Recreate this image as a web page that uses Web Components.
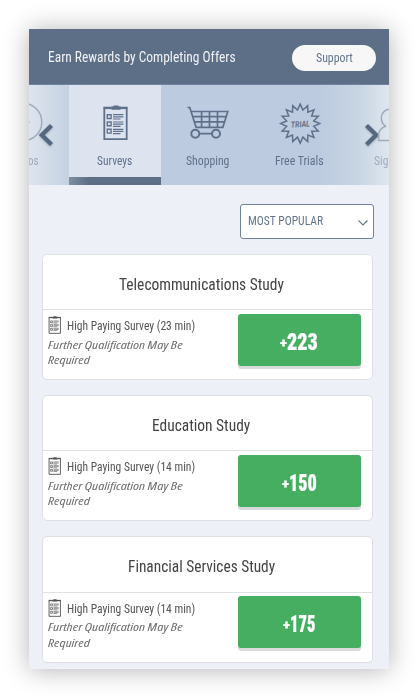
<!DOCTYPE html>
<html lang="en">
<head>
<meta charset="utf-8">
<title>Offers</title>
<style>
html,body{margin:0;background:#fff}
body{width:418px;height:698px;overflow:hidden;font-family:Roboto,"Liberation Sans",sans-serif}
</style>
</head>
<body>
<offer-app></offer-app>
<script>
const define = (name, html, setup) => {
  const t = document.createElement('template');
  t.innerHTML = html;
  customElements.define(name, class extends HTMLElement {
    connectedCallback() {
      if (this.shadowRoot) return;
      const root = this.attachShadow({mode: 'open'});
      root.append(t.content.cloneNode(true));
      if (setup) setup(this, root);
    }
  });
};

// Single line of condensed text set to an exact width
define('fit-text', `
<style>
:host{display:block;white-space:nowrap;flex:none}
span{display:inline-block;font-stretch:75%;transform-origin:0 50%;vertical-align:top}
</style><span><slot></slot></span>`, (el, root) => {
  const w = +el.getAttribute('w');
  el.style.width = w + 'px';
  const s = root.querySelector('span');
  requestAnimationFrame(() => {
    s.style.transform = `scaleX(${w / s.offsetWidth})`;
  });
  s.style.transform = `scaleX(${w / (s.offsetWidth || w)})`;
});

const icons = {
  video: '<circle cx="22" cy="20" r="18.800"/><path d="M26.500 18.900 28.500 20l-2 1.100Z" stroke-width="1"/>',
  survey: '<path d="M11.3 6.2h22.4v31H11.3Z" stroke-width="1.8"/><path d="M10.5 5.9h24" stroke-width="2.4"/><path d="M18.500 4.600h2v-1h5v1h2v3.200h-9Z" fill="currentColor" stroke="none"/><path d="M14.3 12.7h3.8v3.8h-3.8ZM14.3 20h3.8v3.8h-3.8ZM14.3 27.3h3.8v3.8h-3.8Z" stroke-width="1.4"/><path d="M20 12.7h10.4M20 14.8h10.4M20 17h7.5M20 20h10.4M20 22.1h10.4M20 24.3h7.5M20 27.3h10.4M20 29.4h10.4M20 31.6h7.5" stroke-width="1.2"/>',
  cart: '<path d="M2.5 5.5h2.3l6.4 20.2M5.8 9.5h37L37.8 25.3H11M7.4 14.6h33.8M9 19.9h30.5M16.6 9.5v15.8M24.5 9.5v15.8M32.5 9.5v15.8M14.5 31.7h12.3" stroke-width="1.700"/><circle cx="10.3" cy="31.7" r="4" stroke-width="2"/><circle cx="31" cy="31.7" r="4" stroke-width="2"/>',
  person: '<path d="M22 7.2c-5.800 0-9.700 3.700-9.700 8.600 0 3.400 1.500 6.600 4.100 8.400-4.200 1.600-6.800 4.600-6.800 9v5.300h25v-5.300c0-4.400-2.800-7.400-6.800-9 2.600-1.800 4-5 4-8.400C31.700 10.900 27.800 7.200 22 7.200Z" stroke-width="1.500"/>'
};
const star = () => {
  const p = [];
  for (let i = 0; i < 32; i++) {
    const r = i % 2 ? 13.8 : 19.5, a = Math.PI * i / 16 - Math.PI / 2;
    p.push((23.2 + r * Math.cos(a)).toFixed(2) + ',' + (21.6 + r * Math.sin(a)).toFixed(2));
  }
  return `<polygon points="${p.join(' ')}" stroke-width="1.500"/><text x="13.8" y="25.200" transform="rotate(-4 23 22)" textLength="19" lengthAdjust="spacingAndGlyphs" font-size="8.500" font-weight="700" font-style="italic" fill="currentColor" stroke="none">TRIAL</text>`;
};
icons.trial = star();

define('ui-icon', `
<style>:host{display:block;width:44px;height:44px;flex:none}svg{display:block;width:100%;height:100%}</style>
<svg fill="none" stroke="currentColor" stroke-width="1.500"></svg>`, (el, root) => {
  const s = root.querySelector('svg');
  s.setAttribute('viewBox', el.getAttribute('box') || '0 0 44 44');
  s.innerHTML = icons[el.getAttribute('name')];
});

define('offer-header', `
<style>
:host{display:flex;height:55px;background:#5d6f86;border-bottom:1px solid #6f82a0;padding:0 13px 0 19px;justify-content:space-between;align-items:flex-start;box-sizing:content-box}
.t{font-size:14px;line-height:20px;color:#f0f2f5;margin-top:18px}
.b{width:84px;height:26px;border-radius:13px;background:#f7f7f8;display:flex;align-items:center;justify-content:center;margin-top:16px;font-size:12px;line-height:26px;color:#64748c}
</style>
<fit-text class="t" w="187.500">Earn Rewards by Completing Offers</fit-text>
<div class="b"><fit-text w="36.500">Support</fit-text></div>`);

define('tab-strip', `
<style>
:host{display:block;position:relative;height:99.500px;overflow:hidden;background:#bccbdf}
.row{display:flex;margin-left:-52px}
.fade{position:absolute;z-index:1;top:0;bottom:0;display:flex;align-items:center;color:#566880}
.l{left:0;width:60px;background:linear-gradient(90deg,rgba(225,231,240,.9),rgba(215,225,232,.28) 67%,rgba(225,231,240,0))}
.r{right:0;width:68px;justify-content:flex-end;background:linear-gradient(270deg,rgba(225,231,240,.95),rgba(215,225,232,.45) 45%,rgba(225,231,240,0))}
svg{display:block;width:20px;height:26px;filter:drop-shadow(0 1px 1px rgba(60,75,95,.35))}
.l svg{margin-left:7px}.r svg{margin-right:7px}
</style>
<div class="row"></div>
<div class="fade l"><svg viewBox="0 0 20 26" fill="none" stroke="currentColor" stroke-width="4.300"><path d="M15.500 3.500 5.800 13l9.700 9.500"/></svg></div>
<div class="fade r"><svg viewBox="0 0 20 26" fill="none" stroke="currentColor" stroke-width="4.300"><path d="M4.500 3.500 14.200 13l-9.700 9.500"/></svg></div>`, (el, root) => {
  const row = root.querySelector('.row');
  row.append(...[
    ['video', 'os', 11, 'left'], ['survey', 'Surveys', 35.5], ['cart', 'Shopping', 43],
    ['trial', 'Free Trials', 48.5], ['person', 'Sig', 14.5, 'right']
  ].map(([icon, label, w, edge]) => {
    const tab = document.createElement('nav-tab');
    tab.setAttribute('icon', icon);
    tab.setAttribute('w', w);
    if (edge) tab.setAttribute('edge', edge);
    if (icon === 'survey') tab.setAttribute('active', '');
    tab.textContent = label;
    return tab;
  }));
});

customElements.define('nav-tab', class extends HTMLElement {
  connectedCallback() {
    if (this.shadowRoot) return;
    this.attachShadow({mode: 'open'}).innerHTML = `
<style>
:host{display:flex;flex-direction:column;align-items:center;width:92px;flex:none;height:99.500px;box-sizing:border-box;padding-top:17px;color:#5f718a}
:host([active]){background:#dde4f0;border-bottom:8px solid #5d6f86}
fit-text{margin-top:6.500px;font-size:12px;line-height:16px}
:host([edge]){color:#a0abb9;position:relative;z-index:2;pointer-events:none}
:host([edge=left]) fit-text{margin-left:20px}
:host([edge=right]) fit-text{margin-right:19px}
</style>
<ui-icon name="${this.getAttribute('icon')}"></ui-icon>
<fit-text w="${this.getAttribute('w')}"><slot></slot></fit-text>`;
  }
});

define('sort-select', `
<style>
:host{display:flex;align-items:center;justify-content:space-between;box-sizing:border-box;width:134px;height:35px;border:1px solid #71829b;border-radius:3px;background:#fff;padding:0 5px 0 7px;font-size:12px;color:#64758d}
fit-text{line-height:20px;margin-top:-1px}
svg{width:10px;height:8px;margin-top:3px}
</style>
<fit-text w="75.500">MOST POPULAR</fit-text>
<svg viewBox="0 0 10 8" fill="none" stroke="#64758d" stroke-width="1.100"><path d="M.6 1.500 5 6l4.400-4.500"/></svg>`);

customElements.define('offer-card', class extends HTMLElement {
  connectedCallback() {
    if (this.shadowRoot) return;
    const a = n => this.getAttribute(n);
    this.attachShadow({mode: 'open'}).innerHTML = `
<style>
:host{display:block;box-sizing:border-box;height:126.500px;border:1px solid #dfe0e3;border-radius:5px;background:#fff}
.head{border-bottom:1px solid #dfe0e2;display:flex;justify-content:center;align-items:center;font-size:16px;line-height:20px;color:#444;padding:5.500px 12.500px 0 0;box-sizing:border-box;height:55.500px}
.body{display:flex;justify-content:space-between;padding:5px 11.500px 0 5.700px}
.row{display:flex;height:20px;font-size:12px;line-height:20px;color:#555;gap:5px;margin-top:1px}
.row ui-icon{width:13.500px;height:18px;color:#555}
.desc{font:italic 11.500px/15.400px "Open Sans","Noto Sans",sans-serif;color:#6c6c6c;margin-top:.700px}
.desc fit-text{height:15.400px}
.btn{width:122.500px;height:52px;border-radius:3px;background:#45ae60;box-shadow:0 3px 0 #dadbdd;color:#fff;display:flex;justify-content:center;align-items:center;margin-top:-1.300px;font-weight:900;font-size:24px;line-height:30px;padding-top:4px;box-sizing:border-box;-webkit-text-stroke:.2px #fff}
.plus{font-size:13px;line-height:30px;margin-top:2px}
</style>
<div class="head"><fit-text w="${a('tw')}">${a('title-text')}</fit-text></div>
<div class="body">
  <div>
    <div class="row"><ui-icon name="survey" box="9.500 3 26 35.500"></ui-icon><fit-text w="128">High Paying Survey (${a('min')} min)</fit-text></div>
    <div class="desc"><fit-text w="134.500">Further Qualification May Be</fit-text><fit-text w="42">Required</fit-text></div>
  </div>
  <div class="btn"><fit-text class="plus" w="7">+</fit-text><fit-text w="${a('pw')}">${a('points')}</fit-text></div>
</div>`;
  }
});

define('offer-app', `
<style>
:host{display:block;box-sizing:border-box;width:360px;height:640px;margin:29px;background:#edf1f7;box-shadow:0 1px 24px rgba(0,0,0,.3)}
.sort{display:flex;justify-content:flex-end;padding:19px 15.500px 15px 0}
.list{display:flex;flex-direction:column;gap:14.900px;padding:0 16px 0 12.500px}
</style>
<offer-header></offer-header>
<tab-strip></tab-strip>
<div class="sort"><sort-select></sort-select></div>
<div class="list">
<offer-card title-text="Telecommunications Study" tw="164.500" min="23" points="223" pw="31"></offer-card>
<offer-card title-text="Education Study" tw="98.500" min="14" points="150" pw="28"></offer-card>
<offer-card title-text="Financial Services Study" tw="147" min="14" points="175" pw="25.500"></offer-card>
</div>`);
</script>
</body>
</html>
